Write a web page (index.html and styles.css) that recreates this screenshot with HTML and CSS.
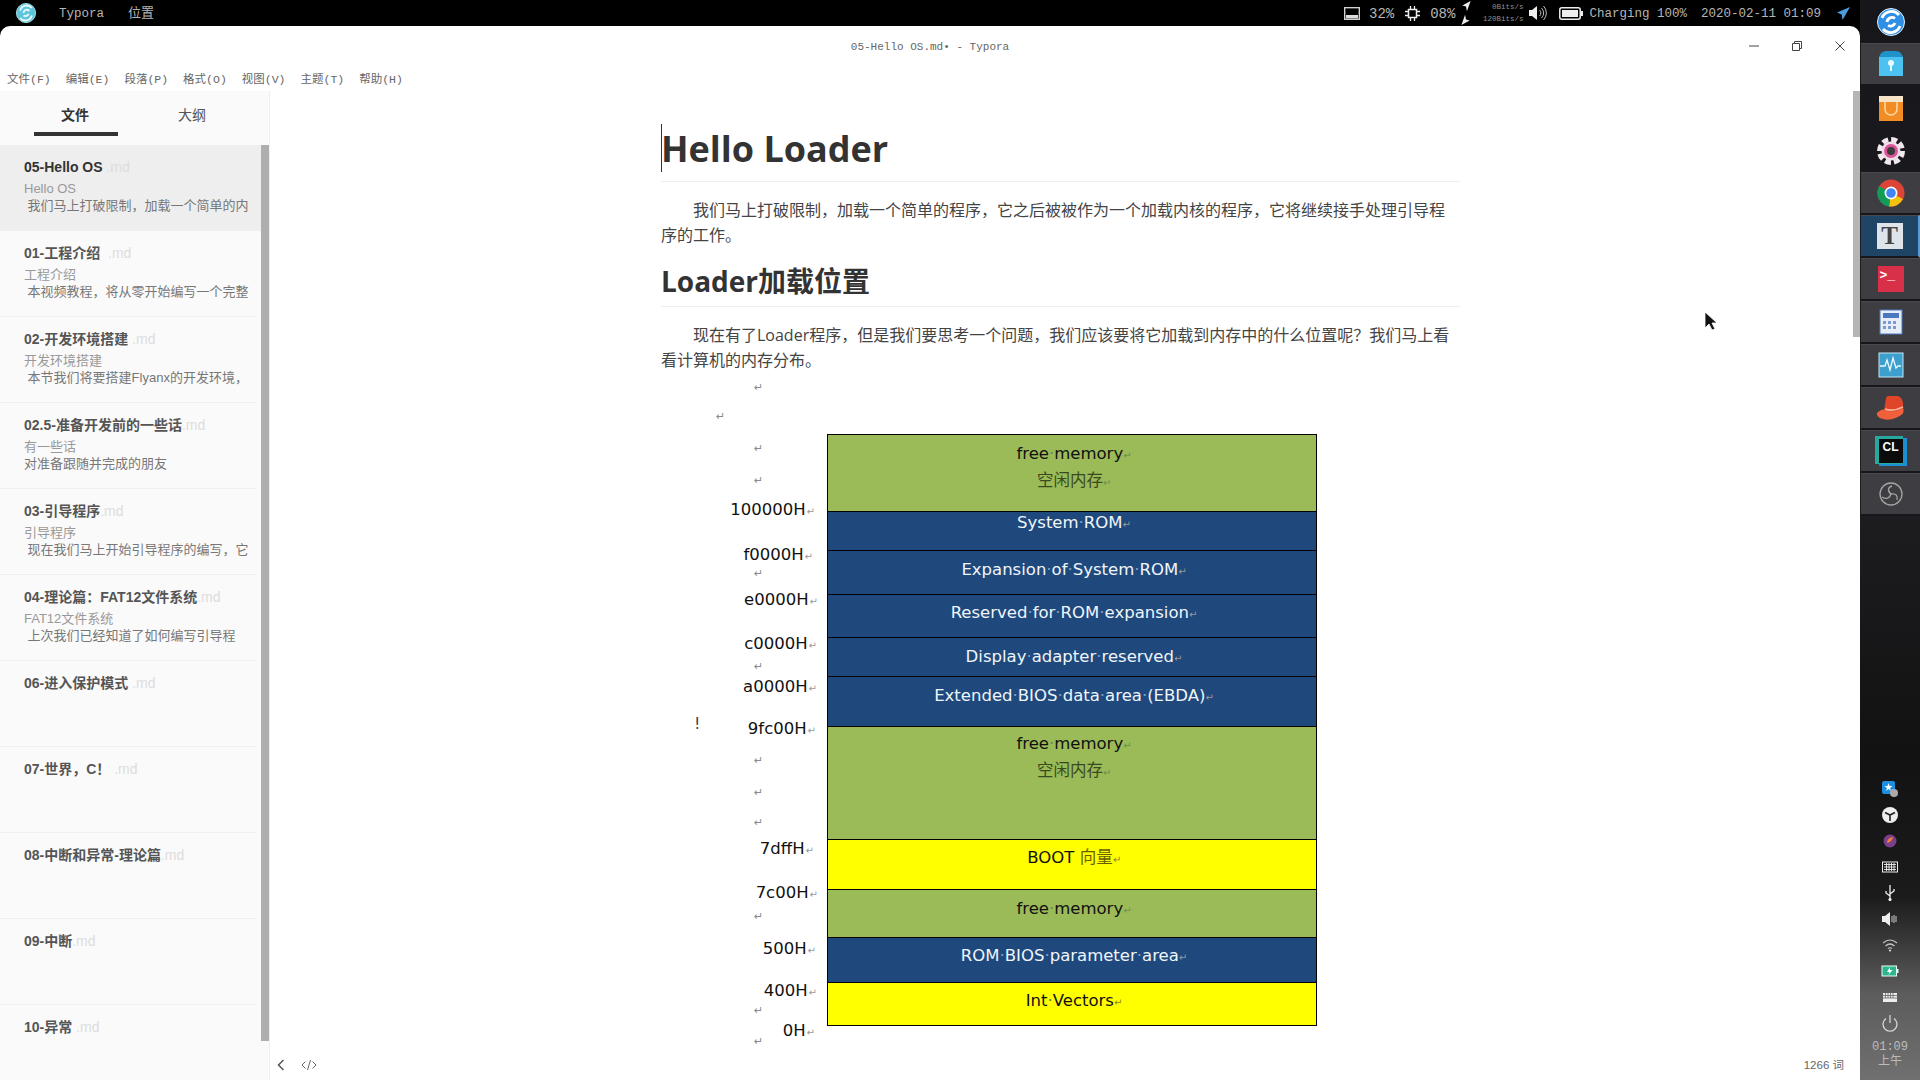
FILE: index.html
```html
<!DOCTYPE html>
<html lang="zh">
<head>
<meta charset="utf-8">
<title>Typora</title>
<link rel="stylesheet" href="styles.css">
</head>
<body>
<div class="desktop">
  <div class="stage">
    <header class="topbar">
      <div class="top-left">
        <svg class="top-logo" viewBox="0 0 24 24"><circle cx="12" cy="12" r="11.5" fill="#5cc5dc"/><circle cx="12" cy="12" r="11.5" fill="none" stroke="#bdeef5"/><path d="M5 9a8 8 0 0 1 14-3M19 15a8 8 0 0 1-14 3M9 12a4 4 0 0 1 7-2.5M15 13a4 4 0 0 1-6 2" fill="none" stroke="#eafcff" stroke-width="2.2"/></svg>
        <span class="app-name">Typora</span>
        <span class="app-place">位置</span>
      </div>
      <div class="top-right">
        <svg class="ic-mem" viewBox="0 0 16 13"><rect x=".7" y=".7" width="14.6" height="11.6" fill="none" stroke="#ddd" stroke-width="1.3"/><rect x="2" y="8" width="12" height="3.4" fill="#ddd"/></svg>
        <span class="stat stat-mem">32%</span>
        <svg class="ic-chip" viewBox="0 0 15 15"><rect x="3.5" y="3.5" width="8" height="8" fill="none" stroke="#eee" stroke-width="1.5"/><path d="M5.5 0v3M9.500 0v3M5.500 12v3M9.500 12v3M0 5.500h3M0 9.500h3M12 5.500h3M12 9.500h3" stroke="#eee" stroke-width="1.3"/></svg>
        <span class="stat stat-cpu">08%</span>
        <svg class="ic-net" viewBox="0 0 12 26"><path d="M11 0 2 5l4 1 1 5zM1 26l9-5-4-1-1-5z" fill="#eee"/></svg>
        <div class="speed"><span>0Bits/s</span><span>120Bits/s</span></div>
        <svg class="ic-vol" viewBox="0 0 18 16"><path d="M0 5h3l5-4v14l-5-4H0z" fill="#eee"/><path d="M10.500 5a4 4 0 0 1 0 6M12.500 3a7 7 0 0 1 0 10M14.500 1a10 10 0 0 1 0 14" fill="none" stroke="#bbb" stroke-width="1"/></svg>
        <svg class="ic-bat" viewBox="0 0 24 13"><rect x=".8" y=".8" width="20.400" height="11.400" rx="2" fill="none" stroke="#eee" stroke-width="1.500"/><rect x="3" y="3" width="16" height="7" fill="#eee"/><rect x="22" y="4" width="2" height="5" fill="#eee"/></svg>
        <span class="stat stat-bat">Charging 100%</span>
        <span class="stat stat-date">2020-02-11 01:09</span>
        <svg class="ic-plane" viewBox="0 0 14 14"><path d="M14 0 0 6l5 2 1 6z" fill="#4a9fe0"/></svg>
      </div>
    </header>

    <section class="window">
      <div class="titlebar">
        <span class="win-title">05-Hello OS.md• - Typora</span>
        <div class="win-controls">
          <svg viewBox="0 0 12 12"><path d="M1 6h10" stroke="#444"/></svg>
          <svg viewBox="0 0 12 12"><path d="M1.500 3.500h7v7h-7zM3.500 3.500v-2h7v7h-2" fill="none" stroke="#444"/></svg>
          <svg viewBox="0 0 12 12"><path d="m1.500 1.500 9 9M10.500 1.500l-9 9" stroke="#444"/></svg>
        </div>
      </div>
      <nav class="menubar">
        <span>文件(F)</span><span>编辑(E)</span><span>段落(P)</span><span>格式(O)</span><span>视图(V)</span><span>主题(T)</span><span>帮助(H)</span>
      </nav>

      <div class="workspace">
        <aside class="sidebar">
          <div class="tabs">
            <div class="tab tab-on">文件</div>
            <div class="tab">大纲</div>
          </div>
          <div class="list-wrap">
            <ul class="files">
              <li class="file file-on"><div class="f-title">05-Hello OS <em>.md</em></div><div class="f-sub">Hello OS</div><div class="f-text">&nbsp;我们马上打破限制，加载一个简单的内</div></li>
              <li class="file"><div class="f-title">01-工程介绍 &nbsp;<em>.md</em></div><div class="f-sub">工程介绍</div><div class="f-text">&nbsp;本视频教程，将从零开始编写一个完整</div></li>
              <li class="file"><div class="f-title">02-开发环境搭建 <em>.md</em></div><div class="f-sub">开发环境搭建</div><div class="f-text">&nbsp;本节我们将要搭建Flyanx的开发环境，</div></li>
              <li class="file"><div class="f-title">02.5-准备开发前的一些话<em>.md</em></div><div class="f-sub">有一些话</div><div class="f-text">对准备跟随并完成的朋友</div></li>
              <li class="file"><div class="f-title">03-引导程序<em>.md</em></div><div class="f-sub">引导程序</div><div class="f-text">&nbsp;现在我们马上开始引导程序的编写，它</div></li>
              <li class="file"><div class="f-title">04-理论篇：FAT12文件系统<em>.md</em></div><div class="f-sub">FAT12文件系统</div><div class="f-text">&nbsp;上次我们已经知道了如何编写引导程</div></li>
              <li class="file"><div class="f-title">06-进入保护模式 <em>.md</em></div></li>
              <li class="file"><div class="f-title">07-世界，C！ <em>.md</em></div></li>
              <li class="file"><div class="f-title">08-中断和异常-理论篇<em>.md</em></div></li>
              <li class="file"><div class="f-title">09-中断<em>.md</em></div></li>
              <li class="file"><div class="f-title">10-异常 <em>.md</em></div></li>
            </ul>
            <div class="side-scroll"></div>
          </div>
        </aside>

        <main class="main">
          <div class="doc-scroll">
            <article class="doc">
              <h1><i class="caret"></i>Hello Loader</h1>
              <p>我们马上打破限制，加载一个简单的程序，它之后被被作为一个加载内核的程序，它将继续接手处理引导程序的工作。</p>
              <h2>Loader加载位置</h2>
              <p>现在有了Loader程序，但是我们要思考一个问题，我们应该要将它加载到内存中的什么位置呢？我们马上看看计算机的内存分布。</p>
              <figure class="diagram">
                <span class="mark m1">↵</span><span class="mark m2">↵</span><span class="mark m3">↵</span><span class="mark m4">↵</span><span class="mark m5">↵</span><span class="mark m6">↵</span><span class="mark m7">↵</span><span class="mark m8">↵</span><span class="mark m9">↵</span><span class="mark m10">↵</span><span class="mark m11">↵</span><span class="mark m12">↵</span>
                <span class="addr a1">100000H<b>↵</b></span>
                <span class="addr a2">f0000H<b>↵</b></span>
                <span class="addr a3">e0000H<b>↵</b></span>
                <span class="addr a4">c0000H<b>↵</b></span>
                <span class="addr a5">a0000H<b>↵</b></span>
                <span class="addr a6">9fc00H<b>↵</b></span>
                <span class="addr a7">7dffH<b>↵</b></span>
                <span class="addr a8">7c00H<b>↵</b></span>
                <span class="addr a9">500H<b>↵</b></span>
                <span class="addr a10">400H<b>↵</b></span>
                <span class="addr a11">0H<b>↵</b></span>
                <span class="bang">!</span>
                <div class="stack">
                  <div class="cell green p6">free<u>·</u>memory<b>↵</b><br><span class="zh">空闲内存<b>↵</b></span></div>
                  <div class="cell blue p0">System<u>·</u>ROM<b>↵</b></div>
                  <div class="cell blue p6">Expansion<u>·</u>of<u>·</u>System<u>·</u>ROM<b>↵</b></div>
                  <div class="cell blue p5">Reserved<u>·</u>for<u>·</u>ROM<u>·</u>expansion<b>↵</b></div>
                  <div class="cell blue p6">Display<u>·</u>adapter<u>·</u>reserved<b>↵</b></div>
                  <div class="cell blue p6">Extended<u>·</u>BIOS<u>·</u>data<u>·</u>area<u>·</u>(EBDA)<b>↵</b></div>
                  <div class="cell green p4">free<u>·</u>memory<b>↵</b><br><span class="zh">空闲内存<b>↵</b></span></div>
                  <div class="cell yellow p5">BOOT <span class="zh">向量<b>↵</b></span></div>
                  <div class="cell green p6">free<u>·</u>memory<b>↵</b></div>
                  <div class="cell blue p5">ROM<u>·</u>BIOS<u>·</u>parameter<u>·</u>area<b>↵</b></div>
                  <div class="cell yellow p5">Int<u>·</u>Vectors<b>↵</b></div>
                </div>
              </figure>
            </article>
            <div class="doc-thumb"></div>
          </div>
          <footer class="statusbar">
            <svg class="st-back" viewBox="0 0 10 14"><path d="M7.500 2 2.500 7l5 5" fill="none" stroke="#555" stroke-width="1.500"/></svg>
            <svg class="st-code" viewBox="0 0 16 12"><path d="M4.500 2.500 1 6l3.500 3.500M11.500 2.500 15 6l-3.500 3.500M9.500 1 6.500 11" fill="none" stroke="#666"/></svg>
            <span class="words">1266 词</span>
          </footer>
        </main>
      </div>
    </section>
  </div>

  <aside class="dock">
    <div class="slot">
      <svg viewBox="0 0 30 30"><circle cx="15" cy="15" r="13.500" fill="#2f8fe6"/><circle cx="15" cy="15" r="13.500" fill="none" stroke="#dff2ff"/><path d="M6 11a10 10 0 0 1 17-3M24 19a10 10 0 0 1-17 3M11 15a5 5 0 0 1 8-3.500M19 16a5 5 0 0 1-7 2.500" fill="none" stroke="#fff" stroke-width="2.800"/></svg>
    </div>
    <div class="slot tile">
      <svg viewBox="0 0 30 30"><path d="M3 8h24v19H3z" fill="#4cc2f1"/><path d="M3 8q2-6 7-6h10q5 0 7 6z" fill="#1f93c9"/><circle cx="15" cy="14" r="3" fill="#e8f8ff"/><path d="M14 16h2v6h-2z" fill="#e8f8ff"/></svg>
    </div>
    <div class="slot">
      <svg viewBox="0 0 30 30"><path d="M3 9h24v19H3z" fill="#f28c25"/><path d="M3 3h24v6H3z" fill="#f6e3c8"/><path d="M9 9v7a6 6 0 0 0 12 0V9" fill="none" stroke="#fbd9a8" stroke-width="1.500"/></svg>
    </div>
    <div class="slot">
      <svg viewBox="0 0 30 30"><circle cx="15" cy="15" r="11.500" fill="none" stroke="#f2e8ee" stroke-width="5" stroke-dasharray="6 3"/><circle cx="15" cy="15" r="9.500" fill="#f0dfe8"/><circle cx="15" cy="15" r="5.500" fill="#3a3a3a" stroke="#d9559a" stroke-width="3"/></svg>
    </div>
    <div class="slot tile">
      <svg viewBox="0 0 30 30"><circle cx="15" cy="15" r="13.500" fill="#db4437"/><path d="M15 15 27 21A13.500 13.500 0 0 1 13 28.400z" fill="#f4c20d"/><path d="M15 15 13 28.400A13.500 13.500 0 0 1 3.300 8z" fill="#0f9d58"/><circle cx="15" cy="15" r="6.500" fill="#fff"/><circle cx="15" cy="15" r="4.800" fill="#4285f4"/></svg>
    </div>
    <div class="slot tile tile-on">
      <div class="ty-logo">T</div>
    </div>
    <div class="slot tile">
      <div class="term-logo">&gt;_</div>
    </div>
    <div class="slot tile">
      <svg viewBox="0 0 30 30"><rect x="4" y="3" width="22" height="24" fill="#e8eef8" stroke="#4a78c0"/><rect x="7" y="6" width="16" height="5" fill="#4a78c0"/><path d="M7 14h3v3H7zM12 14h3v3h-3zM17 14h3v3h-3zM7 19h3v3H7zM12 19h3v3h-3zM17 19h3v3h-3z" fill="#7b9ad0"/></svg>
    </div>
    <div class="slot tile">
      <svg viewBox="0 0 30 30"><rect x="3" y="3" width="24" height="24" fill="#3d9fce" stroke="#bfe6f5"/><path d="M4 16h5l2-6 3 10 3-12 3 10 2-2h3" fill="none" stroke="#eafaff" stroke-width="1.300"/></svg>
    </div>
    <div class="slot tile">
      <svg viewBox="0 0 30 30"><path d="M8 18 10 5q1-3 5-2l7 0q6 2 5 12 0 5-9 6z" fill="#e0452a"/><path d="M1 20q5-5 8-3 8 4 18-2 3 5-5 9-8 4-15 2Q0 24 1 20z" fill="#f0603a"/><path d="M9 16q8 3 18-2" fill="none" stroke="#f9b59a" stroke-width="1.500"/></svg>
    </div>
    <div class="slot tile">
      <div class="cl-logo">CL</div>
    </div>
    <div class="slot tile">
      <svg viewBox="0 0 30 30"><circle cx="15" cy="15" r="11" fill="none" stroke="#a5a5a5" stroke-width="1.300"/><path d="M15 15c-4-3-3-7 1-8M15 15c5-1 7 2 6 6M15 15c-1 4-5 6-9 3" fill="none" stroke="#a5a5a5" stroke-width="1.300"/></svg>
    </div>

    <div class="tray">
      <svg viewBox="0 0 18 18"><rect x="1" y="1" width="13" height="13" rx="2" fill="#1e8fe0"/><path d="m7.500 3 1 3h3l-2.500 2 1 3-2.500-2-2.500 2 1-3-2.500-2h3z" fill="#fff"/><circle cx="13" cy="13" r="4" fill="#aaa"/></svg>
      <svg viewBox="0 0 18 18"><circle cx="9" cy="9" r="8" fill="#eee"/><path d="M4 6.500 9 9l5-2.500M9 9v6" stroke="#222" stroke-width="1.600" fill="none"/></svg>
      <svg viewBox="0 0 18 18"><circle cx="9" cy="9" r="6.500" fill="#7b3f8c"/><path d="M6 11q0-5 6-6-1 5-6 6z" fill="#f08030"/></svg>
      <svg viewBox="0 0 18 18"><rect x="1.500" y="4" width="15" height="10" fill="none" stroke="#eee"/><path d="M3 6.500h12M3 9h12M3 11.500h12M5.500 5v8M8 5v8M10.500 5v8M13 5v8" stroke="#eee" stroke-width=".9"/></svg>
      <svg viewBox="0 0 18 18"><path d="M9 1v16M9 12 5 9V7M9 10l4-3V5" fill="none" stroke="#eee" stroke-width="1.300"/><circle cx="9" cy="15.500" r="1.600" fill="#eee"/></svg>
      <svg viewBox="0 0 18 18"><path d="M1 6h3l5-4v14l-5-4H1z" fill="#eee"/><path d="M11 6v6M13 5v8M15 6v6" stroke="#ccc"/></svg>
      <svg viewBox="0 0 18 18"><path d="M2 7q7-6 14 0M4.500 10q4.500-4 9 0M7 12.500q2-1.500 4 0" fill="none" stroke="#c4c4c4" stroke-width="1.200"/><circle cx="9" cy="14.500" r="1.100" fill="#ddd"/></svg>
      <svg viewBox="0 0 18 18"><rect x="1" y="4" width="14.500" height="10" fill="#2fb58c" stroke="#e8fff6"/><rect x="15.500" y="7" width="2" height="4" fill="#e8fff6"/><path d="m9 5-3 5h2.500L7.500 13l4-5H9z" fill="#fff"/></svg>
      <svg viewBox="0 0 18 18"><rect x="2" y="5" width="14" height="9" fill="#eee"/><path d="M2 7.500h14M2 10h14M4.500 5v5M7 5v5M9.500 5v5M12 5v5" stroke="#666" stroke-width=".8"/></svg>
      <svg viewBox="0 0 18 18"><path d="M5 4.500a7 7 0 1 0 8 0M9 1v8" fill="none" stroke="#ddd" stroke-width="1.200"/></svg>
      <div class="tray-time">01:09<br>上午</div>
    </div>
  </aside>
</div>
<svg class="pointer" viewBox="0 0 14 20"><path d="M1 1v16l4-4 3 6 3-1-3-6h5z" fill="#111" stroke="#fff" stroke-width=".8"/></svg>
</body>
</html>
```
FILE: styles.css
```css
* { box-sizing: border-box; }
html, body { margin: 0; height: 100%; overflow: hidden; background: #000; }
body { font-family: "Liberation Sans", "Noto Sans CJK SC", sans-serif; color: #333; }
svg { display: block; }
.desktop { display: flex; width: 1920px; height: 1080px; }
.stage { flex: 1; display: flex; flex-direction: column; min-width: 0; }

/* top panel */
.topbar { height: 26px; background: #000; display: flex; justify-content: space-between; align-items: center; color: #b5b5b5; font: 12.500px/26px "Liberation Mono", "Noto Sans CJK SC", monospace; }
.top-left { display: flex; align-items: center; }
.top-logo { width: 20px; height: 20px; margin-left: 16px; }
.app-name { margin-left: 23px; width: 69px; padding-top: 1px; }
.app-place { font-size: 13px; padding-top: 1px; }
.top-right { display: flex; align-items: center; }
.stat { padding-top: 1px; }
.ic-mem { width: 16px; height: 13px; }
.stat-mem { margin-left: 9px; font-size: 14px; }
.ic-chip { width: 15px; height: 15px; margin-left: 11px; }
.stat-cpu { margin-left: 10px; font-size: 14px; }
.ic-net { width: 12px; height: 24px; margin-left: 5px; }
.speed { display: flex; flex-direction: column; align-items: flex-end; width: 48px; margin-left: 3px; font-size: 7.500px; line-height: 12px; color: #8f8f8f; }
.ic-vol { width: 18px; height: 16px; margin-left: 6px; }
.ic-bat { width: 24px; height: 13px; margin-left: 12px; }
.stat-bat { margin-left: 6px; }
.stat-date { margin-left: 14px; }
.ic-plane { width: 13px; height: 13px; margin-left: 16px; margin-right: 10px; }

/* window */
.window { flex: 1; min-height: 0; display: flex; flex-direction: column; background: #fff; border-radius: 10px 10px 0 0; overflow: hidden; }
.titlebar { height: 39px; display: flex; align-items: center; justify-content: center; position: relative; flex: none; }
.win-title { font: 11px "Liberation Mono", monospace; color: #666; padding-top: 2px; }
.win-controls { position: absolute; right: 14px; top: 14px; display: flex; gap: 31px; }
.win-controls svg { width: 12px; height: 12px; }
.menubar { height: 26px; flex: none; display: flex; gap: 15px; padding-left: 7px; align-items: center; font: 11.500px "Liberation Mono", "Noto Sans CJK SC", monospace; color: #666; }
.workspace { flex: 1; min-height: 0; display: flex; }

/* sidebar */
.sidebar { width: 270px; flex: none; display: flex; flex-direction: column; background: #fafafa; border-right: 1px solid #efefef; }
.tabs { height: 54px; flex: none; display: flex; }
.tab { font-size: 14px; line-height: 48px; height: 45px; text-align: center; color: #555; margin-left: 34px; width: 84px; }
.tab + .tab { margin-left: 32px; }
.tab-on { font-weight: 700; color: #333; border-bottom: 4px solid #333; padding-right: 2px; }
.list-wrap { flex: 1; min-height: 0; display: flex; overflow: hidden; position: relative; }
.files { list-style: none; margin: 0; padding: 0; width: 261px; flex: none; }
.file { height: 86px; padding: 13px 5px 0 24px; margin-right: 5px; border-bottom: 1px solid #f0f0f0; white-space: nowrap; overflow: hidden; }
.file-on { background: #eee; margin: 0; border-bottom: 0; }
.f-title { font-size: 14px; font-weight: 700; line-height: 18px; color: #555; }
.file-on .f-title { color: #333; }
.f-title em { font-style: normal; font-weight: 400; color: #ddd; }
.f-sub { font-size: 13px; line-height: 17px; margin-top: 4px; color: #999; }
.f-text { font-size: 13px; line-height: 18px; color: #777; }
.side-scroll { width: 8px; height: 896px; background: #aeaeae; flex: none; }

/* editor */
.main { flex: 1; min-width: 0; display: flex; flex-direction: column; }
.doc-scroll { flex: 1; min-height: 0; overflow: hidden; position: relative; padding-left: 391px; }
.doc { width: 799px; font-family: "Open Sans", "Noto Sans CJK SC", sans-serif; }
.doc h1 { position: relative; margin: 0; padding: 34px 0 8px; font-size: 36px; line-height: 48px; font-weight: 700; border-bottom: 1px solid #eee; color: #333; }
.caret { position: absolute; left: 0; top: 33px; width: 1px; height: 48px; background: #333; }
.doc h2 { margin: 14px 0 0; padding-bottom: 6px; font-size: 28px; line-height: 38px; font-weight: 700; border-bottom: 1px solid #eee; color: #333; }
.doc p { margin: 16px 0 0; font-size: 16px; line-height: 25px; text-indent: 32px; color: #444; }
.doc-thumb { position: absolute; right: 0; top: 0; width: 7px; height: 246px; background: #b5b5b5; }

/* memory map figure */
.diagram { position: relative; margin: 0; padding: 61px 0 0 166px; font-family: "DejaVu Sans", "Noto Sans CJK SC", sans-serif; }
.stack { width: 490px; display: grid; grid-template-rows: 76px 39px 44px 43px 39px 50px 113px 50px 48px 45px 43px; border: 1px solid #000; }
.cell { border-top: 1px solid #000; padding-left: 4px; text-align: center; font-size: 16.500px; line-height: 25px; color: #111; }
.cell:first-child { border-top: 0; }
.cell b, .addr b { font-weight: 400; font-size: 10px; color: #999; }
.green b { color: #6f8f4f; }
.yellow b { color: #8a8a20; }
.addr b { margin-left: 1px; }
.cell u { text-decoration: none; color: #6a8a50; }
.green { background: #9bbb59; }
.blue { background: #1f497d; color: #f0f5fa; }
.blue u { color: #7f9fc4; }
.yellow { background: #ff0; }
.zh { font-family: "Noto Sans CJK SC", sans-serif; color: #3a4a20; vertical-align: top; line-height: 22px; }
.yellow .zh { color: #665f00; }
.p0 { padding-top: 0; line-height: 22px; }
.p4 { padding-top: 4px; }
.p5 { padding-top: 5px; }
.p6 { padding-top: 6px; }

.addr { position: absolute; font-size: 16.500px; line-height: 20px; color: #111; white-space: nowrap; }
.bang { position: absolute; left: 33px; top: 341px; font-size: 16px; line-height: 20px; color: #444; }
.mark { position: absolute; left: 93px; margin-top: 1px; font-size: 11px; line-height: 14px; color: #888; }
.a1 { top: 127px; right: 645px; }
.a2 { top: 172px; right: 647px; }
.a3 { top: 217px; right: 642px; }
.a4 { top: 261px; right: 643px; }
.a5 { top: 304px; right: 643px; }
.a6 { top: 346px; right: 644px; }
.a7 { top: 466px; right: 646px; }
.a8 { top: 510px; right: 642px; }
.a9 { top: 566px; right: 644px; }
.a10 { top: 608px; right: 643px; }
.a11 { top: 648px; right: 645px; }
.m1 { top: 7px; }
.m2 { top: 36px; left: 55px; }
.m3 { top: 68px; }
.m4 { top: 100px; }
.m5 { top: 193px; }
.m6 { top: 286px; }
.m7 { top: 380px; }
.m8 { top: 412px; }
.m9 { top: 442px; }
.m10 { top: 536px; }
.m11 { top: 630px; }
.m12 { top: 661px; }

/* status bar */
.statusbar { height: 30px; flex: none; display: flex; align-items: center; padding: 0 16px 2px 6px; font-size: 12px; color: #666; }
.st-back { width: 10px; height: 14px; margin-top: 2px; }
.st-code { width: 16px; height: 12px; margin: 2px 0 0 15px; }
.words { margin-left: auto; font-size: 11.500px; }

/* dock */
.dock { width: 60px; flex: none; position: relative; display: flex; flex-direction: column; background: linear-gradient(180deg, #17171b 0, #1e1e22 45%, #121212 70%, #1b1b1b 83%, #5c5c5c 92%, #707070 100%); }
.slot { height: 43px; flex: none; display: flex; align-items: center; justify-content: center; margin-left: 1px; }
.slot svg { width: 30px; height: 30px; }
.tile { background: #3e3e42; border-bottom: 2px solid #17171b; border-top: 1px solid #4a4a4e; }
.tile-on { background: #1e4566; border-right: 2px solid #5b9bd5; }
.ty-logo { width: 26px; height: 26px; background: #dfe4ea; color: #444; font: 700 25px/26px "Liberation Serif", serif; text-align: center; }
.term-logo { width: 26px; height: 26px; background: #d9304a; color: #fff; font: 700 13px/20px "Liberation Mono", monospace; padding-left: 2px; }
.cl-logo { width: 24px; height: 24px; background: #0b0b0b; color: #fff; font: 700 12px/16px "Liberation Sans", sans-serif; text-align: center; box-shadow: -2px -1px 0 2px #27a9a0, 2px 1px 0 2px #1c8fd0; }
.tray { position: absolute; left: 0; right: 0; top: 780px; display: flex; flex-direction: column; align-items: center; gap: 8px; }
.tray svg { width: 18px; height: 18px; }
.tray-time { margin-top: 0; font: 12px/15px "Liberation Mono", "Noto Sans CJK SC", monospace; color: #bbb; text-align: center; }

.pointer { position: absolute; left: 1704px; top: 311px; width: 14px; height: 20px; }
```
